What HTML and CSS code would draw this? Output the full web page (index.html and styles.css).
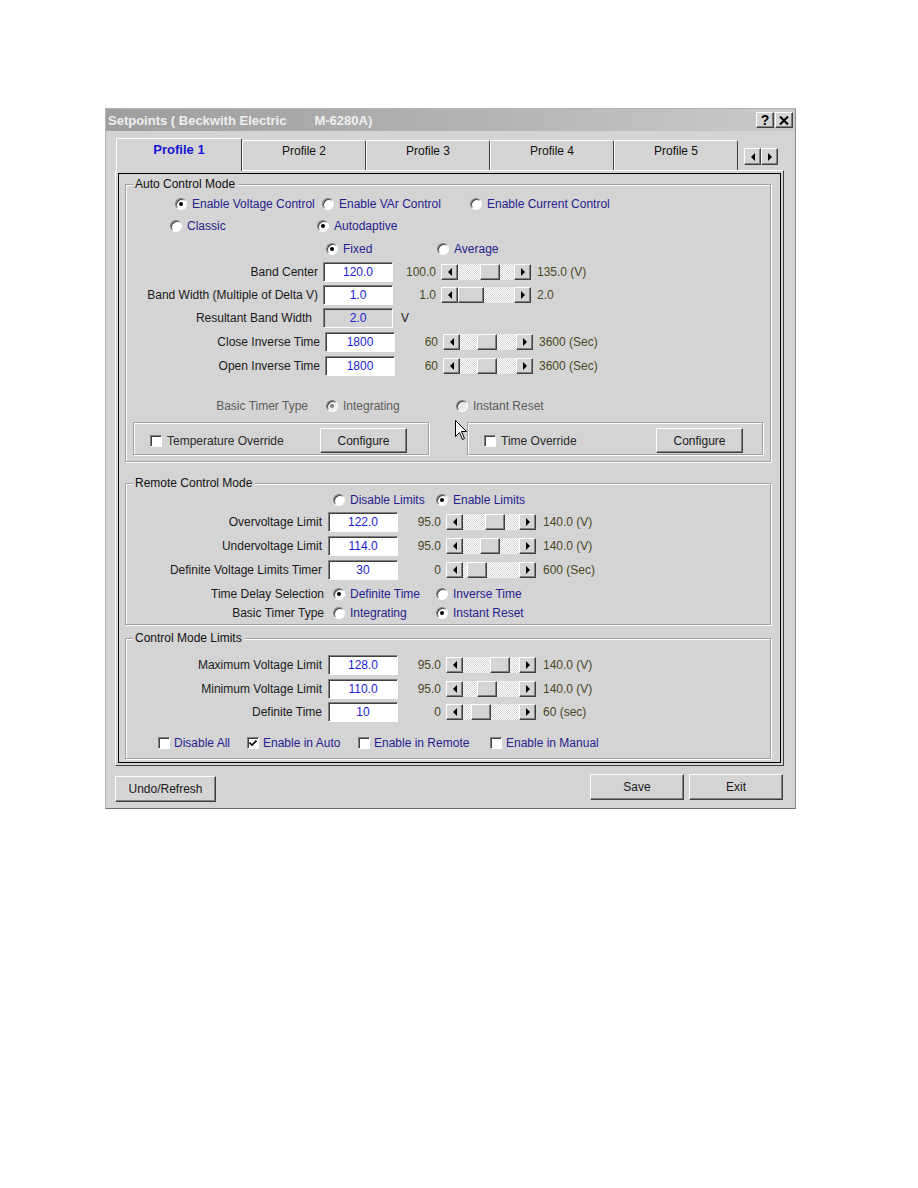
FILE: index.html
```html
<!DOCTYPE html>
<html>
<head>
<meta charset="utf-8">
<title>Setpoints</title>
<link rel="stylesheet" href="styles.css">
</head>
<body>
<div class="page">
  <div class="win">
    <div class="titlebar">
      <span class="t1">Setpoints ( Beckwith Electric</span><span class="t2">M-6280A)</span>
      <div class="tbtns">
        <span class="tbtn q">?</span>
        <span class="tbtn x"><svg width="10" height="9" viewBox="0 0 10 9"><path d="M1 0.5 L9 8.5 M9 0.5 L1 8.5" stroke="#000" stroke-width="2"/></svg></span>
      </div>
    </div>

    <div class="tabs">
      <div class="tab active">Profile 1</div>
      <div class="tab">Profile 2</div>
      <div class="tab">Profile 3</div>
      <div class="tab">Profile 4</div>
      <div class="tab">Profile 5</div>
      <div class="tabarrows"><span class="btn3d arr l"></span><span class="btn3d arr r"></span></div>
    </div>

    <div class="panel">
      <div class="frame">

        <div class="group g-auto">
          <div class="legend">Auto Control Mode</div>
          <div class="row m4 pl49">
            <span class="opt w147"><span class="radio on"></span>Enable Voltage Control</span>
            <span class="opt w148"><span class="radio"></span>Enable VAr Control</span>
            <span class="opt"><span class="radio"></span>Enable Current Control</span>
          </div>
          <div class="row m4 pl44">
            <span class="opt w147"><span class="radio"></span>Classic</span>
            <span class="opt"><span class="radio on"></span>Autodaptive</span>
          </div>
          <div class="row m5 pl200">
            <span class="opt w111"><span class="radio on"></span>Fixed</span>
            <span class="opt"><span class="radio"></span>Average</span>
          </div>
          <div class="row m5 data">
            <span class="lbl">Band Center</span><span class="field">120.0</span><span class="min">100.0</span>
            <div class="sb"><span class="btn3d arr l"></span><span class="track"><span class="btn3d thumb" style="margin-left:22px"></span></span><span class="btn3d arr r"></span></div>
            <span class="max">135.0 (V)</span>
          </div>
          <div class="row m5 data">
            <span class="lbl">Band Width (Multiple of Delta V)</span><span class="field">1.0</span><span class="min">1.0</span>
            <div class="sb"><span class="btn3d arr l"></span><span class="track"><span class="btn3d thumb wide" style="margin-left:0px"></span></span><span class="btn3d arr r"></span></div>
            <span class="max">2.0</span>
          </div>
          <div class="row m5 data">
            <span class="lbl pr6">Resultant Band Width</span><span class="field ro">2.0</span><span class="unit">V</span>
          </div>
          <div class="row m6 data sh2">
            <span class="lbl">Close Inverse Time</span><span class="field">1800</span><span class="min">60</span>
            <div class="sb"><span class="btn3d arr l"></span><span class="track"><span class="btn3d thumb" style="margin-left:17px"></span></span><span class="btn3d arr r"></span></div>
            <span class="max">3600 (Sec)</span>
          </div>
          <div class="row m6 data sh2">
            <span class="lbl">Open Inverse Time</span><span class="field">1800</span><span class="min">60</span>
            <div class="sb"><span class="btn3d arr l"></span><span class="track"><span class="btn3d thumb" style="margin-left:17px"></span></span><span class="btn3d arr r"></span></div>
            <span class="max">3600 (Sec)</span>
          </div>
          <div class="row m22">
            <span class="lbl dis w182">Basic Timer Type</span>
            <span class="opt dis ml18 w130"><span class="radio on disr"></span>Integrating</span>
            <span class="opt dis"><span class="radio disr"></span>Instant Reset</span>
          </div>
          <div class="subrow">
            <div class="subbox">
              <span class="ck plain"><span class="cb"></span>Temperature Override</span>
              <span class="btn3d pbtn cfg">Configure</span>
            </div>
            <div class="subbox right">
              <span class="ck plain"><span class="cb"></span>Time Override</span>
              <span class="btn3d pbtn cfg">Configure</span>
            </div>
          </div>
        </div>

        <div class="group g-remote">
          <div class="legend">Remote Control Mode</div>
          <div class="row m1 pl207">
            <span class="opt w103"><span class="radio"></span>Disable Limits</span>
            <span class="opt"><span class="radio on"></span>Enable Limits</span>
          </div>
          <div class="row m4 data">
            <span class="lbl">Overvoltage Limit</span><span class="field">122.0</span><span class="min">95.0</span>
            <div class="sb"><span class="btn3d arr l"></span><span class="track"><span class="btn3d thumb" style="margin-left:22px"></span></span><span class="btn3d arr r"></span></div>
            <span class="max">140.0 (V)</span>
          </div>
          <div class="row m6 data">
            <span class="lbl">Undervoltage Limit</span><span class="field">114.0</span><span class="min">95.0</span>
            <div class="sb"><span class="btn3d arr l"></span><span class="track"><span class="btn3d thumb" style="margin-left:17px"></span></span><span class="btn3d arr r"></span></div>
            <span class="max">140.0 (V)</span>
          </div>
          <div class="row m6 data">
            <span class="lbl">Definite Voltage Limits Timer</span><span class="field">30</span><span class="min">0</span>
            <div class="sb"><span class="btn3d arr l"></span><span class="track"><span class="btn3d thumb" style="margin-left:4px"></span></span><span class="btn3d arr r"></span></div>
            <span class="max">600 (Sec)</span>
          </div>
          <div class="row m6">
            <span class="lbl w198">Time Delay Selection</span>
            <span class="opt ml9 w103"><span class="radio on"></span>Definite Time</span>
            <span class="opt"><span class="radio"></span>Inverse Time</span>
          </div>
          <div class="row m1">
            <span class="lbl w198">Basic Timer Type</span>
            <span class="opt ml9 w103"><span class="radio"></span>Integrating</span>
            <span class="opt"><span class="radio on"></span>Instant Reset</span>
          </div>
        </div>

        <div class="group g-limits">
          <div class="legend">Control Mode Limits</div>
          <div class="row m11 data">
            <span class="lbl">Maximum Voltage Limit</span><span class="field">128.0</span><span class="min">95.0</span>
            <div class="sb"><span class="btn3d arr l"></span><span class="track"><span class="btn3d thumb" style="margin-left:27px"></span></span><span class="btn3d arr r"></span></div>
            <span class="max">140.0 (V)</span>
          </div>
          <div class="row m6 data">
            <span class="lbl">Minimum Voltage Limit</span><span class="field">110.0</span><span class="min">95.0</span>
            <div class="sb"><span class="btn3d arr l"></span><span class="track"><span class="btn3d thumb" style="margin-left:14px"></span></span><span class="btn3d arr r"></span></div>
            <span class="max">140.0 (V)</span>
          </div>
          <div class="row m5 data">
            <span class="lbl">Definite Time</span><span class="field">10</span><span class="min">0</span>
            <div class="sb"><span class="btn3d arr l"></span><span class="track"><span class="btn3d thumb" style="margin-left:8px"></span></span><span class="btn3d arr r"></span></div>
            <span class="max">60 (sec)</span>
          </div>
          <div class="row m13 pl32">
            <span class="ck w89"><span class="cb"></span>Disable All</span>
            <span class="ck w111"><span class="cb"><svg width="8" height="8" viewBox="0 0 8 8"><path d="M0.5 3.5 L3 6 L7.5 1.5" fill="none" stroke="#000" stroke-width="1.6"/></svg></span>Enable in Auto</span>
            <span class="ck w132"><span class="cb"></span>Enable in Remote</span>
            <span class="ck"><span class="cb"></span>Enable in Manual</span>
          </div>
        </div>

      </div>
    </div>

    <div class="bottombar">
      <span class="btn3d pbtn undo">Undo/Refresh</span>
      <span class="btn3d pbtn save">Save</span>
      <span class="btn3d pbtn exit">Exit</span>
    </div>

    <svg class="cursor" width="13" height="21" viewBox="0 0 13 21"><path d="M0.5 0.5 L0.5 16.5 L4.5 12.5 L7.5 19.5 L9.5 18.5 L6.5 11.5 L11.5 11.5 Z" fill="#fff" stroke="#000" stroke-width="1"/></svg>
  </div>
</div>
</body>
</html>
```

FILE: styles.css
```css
body {
  margin: 0;
  background: #ffffff;
  font: 12px "Liberation Sans", Arial, sans-serif;
  color: #1a1a1a;
}

.page {
  padding: 108px 0 0 105px;
}

.win {
  position: relative;
  width: 691px;
  box-sizing: border-box;
  border: 1px solid #b4b4b4;
  border-right-color: #8c8c8c;
  border-bottom-color: #6e6e6e;
  background: #d4d4d4;
  display: flex;
  flex-direction: column;
}

/* title bar */
.titlebar {
  height: 22px;
  display: flex;
  align-items: center;
  padding-left: 2px;
  background: linear-gradient(to right, #9e9e9e, #b4b4b4 55%, #cacaca);
  color: #efefef;
  font-weight: bold;
  font-size: 13px;
  white-space: pre;
}
.t2 { margin-left: 28px; }
.tbtns {
  margin-left: auto;
  margin-right: 2px;
  display: flex;
  gap: 1px;
}
.tbtn {
  width: 18px;
  height: 16px;
  box-sizing: border-box;
  background: #d4d4d4;
  border: 1px solid;
  border-color: #ffffff #404040 #404040 #ffffff;
  box-shadow: inset -1px -1px 0 #808080;
  display: flex;
  align-items: center;
  justify-content: center;
  color: #000;
  font-size: 14px;
  font-weight: bold;
  line-height: 14px;
}

/* generic raised 3d */
.btn3d {
  box-sizing: border-box;
  background: #d4d4d4;
  border: 1px solid;
  border-color: #ffffff #404040 #404040 #ffffff;
  box-shadow: inset -1px -1px 0 #808080;
}

/* tabs */
.tabs {
  margin-top: 7px;
  padding-left: 10px;
  height: 32px;
  display: flex;
  align-items: flex-end;
  position: relative;
  z-index: 1;
}
.tab {
  width: 124px;
  height: 30px;
  box-sizing: border-box;
  border: 1px solid;
  border-color: #ffffff #404040 transparent #ffffff;
  border-bottom: none;
  border-radius: 2px 2px 0 0;
  text-align: center;
  padding-top: 3px;
  line-height: 14px;
  color: #111;
  background: #d4d4d4;
}
.tab.active {
  width: 126px;
  height: 33px;
  margin-bottom: -1px;
  padding-top: 4px;
  color: #1515d6;
  font-weight: bold;
  font-size: 13px;
}
.tabarrows {
  align-self: flex-start;
  margin: 10px 0 0 6px;
  display: flex;
}
.tabarrows .arr {
  width: 17px;
  height: 17px;
}

/* arrows */
.arr {
  width: 17px;
  height: 16px;
  display: flex;
  align-items: center;
  justify-content: center;
}
.arr::before {
  content: "";
  border-style: solid;
}
.arr.l::before {
  border-width: 4px 4px 4px 0;
  border-color: transparent #000 transparent transparent;
}
.arr.r::before {
  border-width: 4px 0 4px 4px;
  border-color: transparent transparent transparent #000;
}

/* panel */
.panel {
  margin-left: 9px;
  width: 669px;
  box-sizing: border-box;
  border: 1px solid;
  border-color: #ffffff #404040 #404040 #ffffff;
  padding: 2px;
}
.frame {
  border: 1px solid #000;
  padding-bottom: 3px;
}

/* group boxes */
.group {
  margin: 10px 9px 0 6px;
  border: 1px solid #a0a0a0;
  box-shadow: inset 1px 1px 0 #ffffff, 1px 1px 0 #ffffff;
  padding-bottom: 6px;
}
.g-remote { margin-top: 21px; padding-bottom: 2px; }
.g-limits { margin-top: 13px; padding-bottom: 6px; }
.legend {
  margin: -8px 0 0 7px;
  padding: 0 3px 0 2px;
  width: max-content;
  height: 14px;
  line-height: 14px;
  background: #d4d4d4;
  color: #111;
}

.row {
  display: flex;
  align-items: center;
  height: 18px;
  margin-top: 5px;
  white-space: nowrap;
}
.m1 { margin-top: 1px; }
.m4 { margin-top: 4px; }
.m5 { margin-top: 5px; }
.m6 { margin-top: 6px; }
.m11 { margin-top: 11px; }
.m13 { margin-top: 13px; }
.m22 { margin-top: 22px; }
.pl32 { padding-left: 32px; }
.pl44 { padding-left: 44px; }
.pl49 { padding-left: 49px; }
.pl200 { padding-left: 200px; }
.pl207 { padding-left: 207px; }
.sh2 { padding-left: 2px; }

.w89 { width: 89px; }
.w103 { width: 103px; }
.w111 { width: 111px; }
.w130 { width: 130px; }
.w132 { width: 132px; }
.w147 { width: 147px; }
.w148 { width: 148px; }
.ml9 { margin-left: 9px; }
.ml18 { margin-left: 18px; }

/* radio options */
.opt {
  display: flex;
  align-items: center;
  gap: 5px;
  color: #261e8e;
  flex-shrink: 0;
}
.radio {
  width: 12px;
  height: 12px;
  box-sizing: border-box;
  border-radius: 50%;
  border: 1px solid;
  border-color: #808080 #ffffff #ffffff #808080;
  box-shadow: inset 1px 1px 0 #404040;
  background: #ffffff;
  display: flex;
  align-items: center;
  justify-content: center;
  flex-shrink: 0;
}
.radio.on::after {
  content: "";
  width: 4px;
  height: 4px;
  border-radius: 50%;
  background: #000;
}
.radio.disr { background: #ececec; }
.radio.disr.on::after { background: #7a7a7a; }
.opt.dis, .lbl.dis { color: #5c5c5c; }

/* checkboxes */
.ck {
  display: flex;
  align-items: center;
  gap: 4px;
  color: #261e8e;
  flex-shrink: 0;
}
.ck.plain { color: #2a2a2a; gap: 5px; margin-top: 4px; }
.cb {
  width: 12px;
  height: 12px;
  box-sizing: border-box;
  border: 1px solid;
  border-color: #808080 #ffffff #ffffff #808080;
  box-shadow: inset 1px 1px 0 #404040;
  background: #ffffff;
  display: flex;
  align-items: center;
  justify-content: center;
  flex-shrink: 0;
}

/* data rows */
.lbl {
  width: 192px;
  text-align: right;
  flex-shrink: 0;
  color: #1a1a1a;
}
.lbl.pr6 { padding-right: 6px; box-sizing: border-box; }
.lbl.w182 { width: 182px; }
.lbl.w198 { width: 198px; }
.field {
  margin-left: 5px;
  width: 70px;
  height: 20px;
  box-sizing: border-box;
  flex-shrink: 0;
  border: 1px solid;
  border-color: #808080 #ffffff #ffffff #808080;
  box-shadow: inset 1px 1px 0 #404040;
  background: #ffffff;
  color: #1c1cd4;
  text-align: center;
  line-height: 18px;
}
.field.ro { background: #d4d4d4; }
.unit { margin-left: 8px; color: #1a1a1a; }
.min {
  width: 43px;
  text-align: right;
  color: #4b4722;
  flex-shrink: 0;
}
.max {
  margin-left: 6px;
  color: #4b4722;
}
.sb {
  margin-left: 5px;
  width: 90px;
  height: 16px;
  display: flex;
  flex-shrink: 0;
}
.track {
  flex: 1;
  display: flex;
  background: repeating-conic-gradient(#d4d4d4 0 25%, #ffffff 0 50%) 0 0 / 2px 2px;
}
.thumb {
  width: 20px;
  height: 16px;
}
.thumb.wide { width: 26px; }

.g-remote .lbl:not(.w198), .g-limits .lbl { width: 196px; }
.g-remote .field, .g-limits .field { margin-left: 6px; }
.g-remote .max, .g-limits .max { margin-left: 7px; }

/* sub boxes */
.subrow {
  display: flex;
  gap: 38px;
  margin: 7px 0 0 7px;
}
.subbox {
  width: 296px;
  height: 33px;
  box-sizing: border-box;
  border: 1px solid #a0a0a0;
  box-shadow: inset 1px 1px 0 #ffffff, 1px 1px 0 #ffffff;
  display: flex;
  align-items: center;
  justify-content: space-between;
  padding: 0 21px 0 16px;
}
.subbox.right { padding-right: 19px; }

/* push buttons */
.pbtn {
  display: flex;
  align-items: center;
  justify-content: center;
  color: #1a1a1a;
  height: 26px;
}
.cfg {
  width: 87px;
  height: 25px;
  align-self: flex-end;
  margin-bottom: 1px;
}

.bottombar {
  display: flex;
  align-items: flex-start;
  margin-top: 8px;
  padding: 0 12px 6px 9px;
}
.undo { width: 101px; margin-top: 2px; }
.save { width: 94px; margin-left: auto; }
.exit { width: 94px; margin-left: 5px; }

.cursor {
  position: absolute;
  left: 349px;
  top: 311px;
}
```
